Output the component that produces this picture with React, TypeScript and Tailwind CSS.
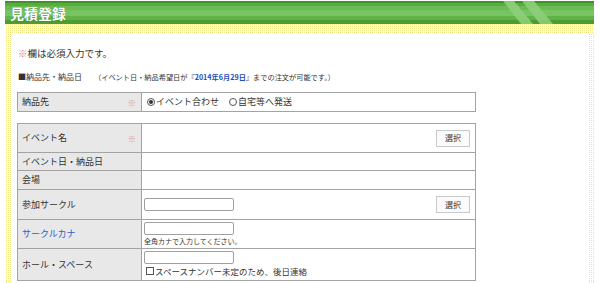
import React from 'react';

const jp = "font-['Noto_Sans_CJK_JP','Noto_Sans',sans-serif]";
const dots = 'bg-[conic-gradient(#f5e485_25%,#ffffff_0)] bg-[length:2px_2px]';

function Req() {
  return <span className="ml-auto mr-[5px] text-[8.5px] text-[#e79a9a]">※</span>;
}

function Label({ text, req, blue }: { text: string; req?: boolean; blue?: boolean }) {
  return (
    <div className={`flex w-[124px] shrink-0 items-center border-r border-[#a3a3a3] bg-[#e8e8e8] pl-[4px] ${blue ? 'text-[#2f5fc4]' : 'text-[#333]'}`}>
      <span>{text}</span>
      {req && <Req />}
    </div>
  );
}

function Btn() {
  return (
    <div className="ml-auto mr-[5px] flex h-[17px] w-[34px] items-center justify-center border border-[#c9c9c9] bg-[#fbfbfb] text-[8px] text-[#333]">
      選択
    </div>
  );
}

function Input() {
  return <div className="h-[13px] w-[90px] rounded-[2px] border border-[#a0a0a0] bg-white" />;
}

export default function App() {
  return (
    <div className={`h-[283px] w-[600px] bg-white pt-px ${jp}`}>
      <div className="ml-[5px] w-[589px]">
        {/* title bar */}
        <div className="relative flex h-[23px] items-center bg-[linear-gradient(#3f9326_0,#3f9326_2px,#58ad3e_2px,#58ad3e_5px,#6abb53_5px,#6abb53_9px,#78c462_9px,#78c462_15px,#62b24a_15px,#62b24a_19px,#4b9c31_19px)] pl-[5px]">
          <span className="text-[14px] font-bold leading-none text-white [text-shadow:0_0_1px_#3a7a25]">見積登録</span>
          <svg className="absolute left-0 top-0" width="589" height="23">
            <polygon points="498,0 509,0 528,23 516,23" fill="#8fd07b" opacity="0.85" />
            <polygon points="517,0 529,0 548,23 535,23" fill="#8fd07b" opacity="0.85" />
          </svg>
        </div>
        <div className={`h-[10px] ${dots}`} />
        <div className="flex h-[249px]">
          <div className={`w-[6px] ${dots}`} />
          <div className="flex-1 pl-[6px] text-[9px] text-[#333]">
            <div className="mt-[13px] pl-[1px] text-[9.5px] leading-[12px]">
              <span className="text-[#e07b7b]">※</span>欄は必須入力です。
            </div>
            <div className="mt-[13px] flex items-center pl-[1px] leading-[10px]">
              <span className="text-[8px]">■納品先・納品日</span>
              <span className="ml-[12px] text-[7.2px]">
                （イベント日・納品希望日が『<b className="text-[#1f4fb8]">2014年6月29日</b>』までの注文が可能です。）
              </span>
            </div>

            <div className="mt-[10px] flex h-[20px] w-[459px] border border-[#a3a3a3]">
              <Label text="納品先" req />
              <div className="flex items-center gap-[10px] pl-[5px]">
                <span className="flex items-center">
                  <span className="flex h-[8px] w-[8px] items-center justify-center rounded-full border border-[#555] bg-white">
                    <span className="h-[4px] w-[4px] rounded-full bg-[#333]" />
                  </span>
                  <span className="ml-[1px]">イベント合わせ</span>
                </span>
                <span className="flex items-center">
                  <span className="h-[8px] w-[8px] rounded-full border border-[#555] bg-white" />
                  <span className="ml-[1px]">自宅等へ発送</span>
                </span>
              </div>
            </div>

            <div className="mt-[11px] w-[459px] border border-[#a3a3a3]">
              <div className="flex h-[28px]">
                <Label text="イベント名" req />
                <div className="flex flex-1 items-center">
                  <Btn />
                </div>
              </div>
              <div className="flex h-[18px] border-t border-[#a3a3a3]">
                <Label text="イベント日・納品日" />
                <div className="flex-1" />
              </div>
              <div className="flex h-[19px] border-t border-[#a3a3a3]">
                <Label text="会場" />
                <div className="flex-1" />
              </div>
              <div className="flex h-[30px] border-t border-[#a3a3a3]">
                <Label text="参加サークル" />
                <div className="flex flex-1 items-center pl-[2px]">
                  <Input />
                  <Btn />
                </div>
              </div>
              <div className="flex h-[29px] border-t border-[#a3a3a3]">
                <Label text="サークルカナ" blue />
                <div className="flex flex-1 flex-col pl-[2px] pt-[2px]">
                  <Input />
                  <span className="mt-[2px] text-[7px] leading-[9px]">全角カナで入力してください。</span>
                </div>
              </div>
              <div className="flex h-[32px] border-t border-[#a3a3a3]">
                <Label text="ホール・スペース" />
                <div className="flex flex-1 flex-col pl-[2px] pt-[2px]">
                  <Input />
                  <span className="mt-[2px] flex items-center pl-[2px] text-[8.5px] leading-[10px]">
                    <span className="mr-[1px] h-[8px] w-[8px] border border-[#555] bg-white" />
                    スペースナンバー未定のため、後日連絡
                  </span>
                </div>
              </div>
            </div>
          </div>
          <div className={`w-[6px] ${dots}`} />
        </div>
      </div>
    </div>
  );
}
